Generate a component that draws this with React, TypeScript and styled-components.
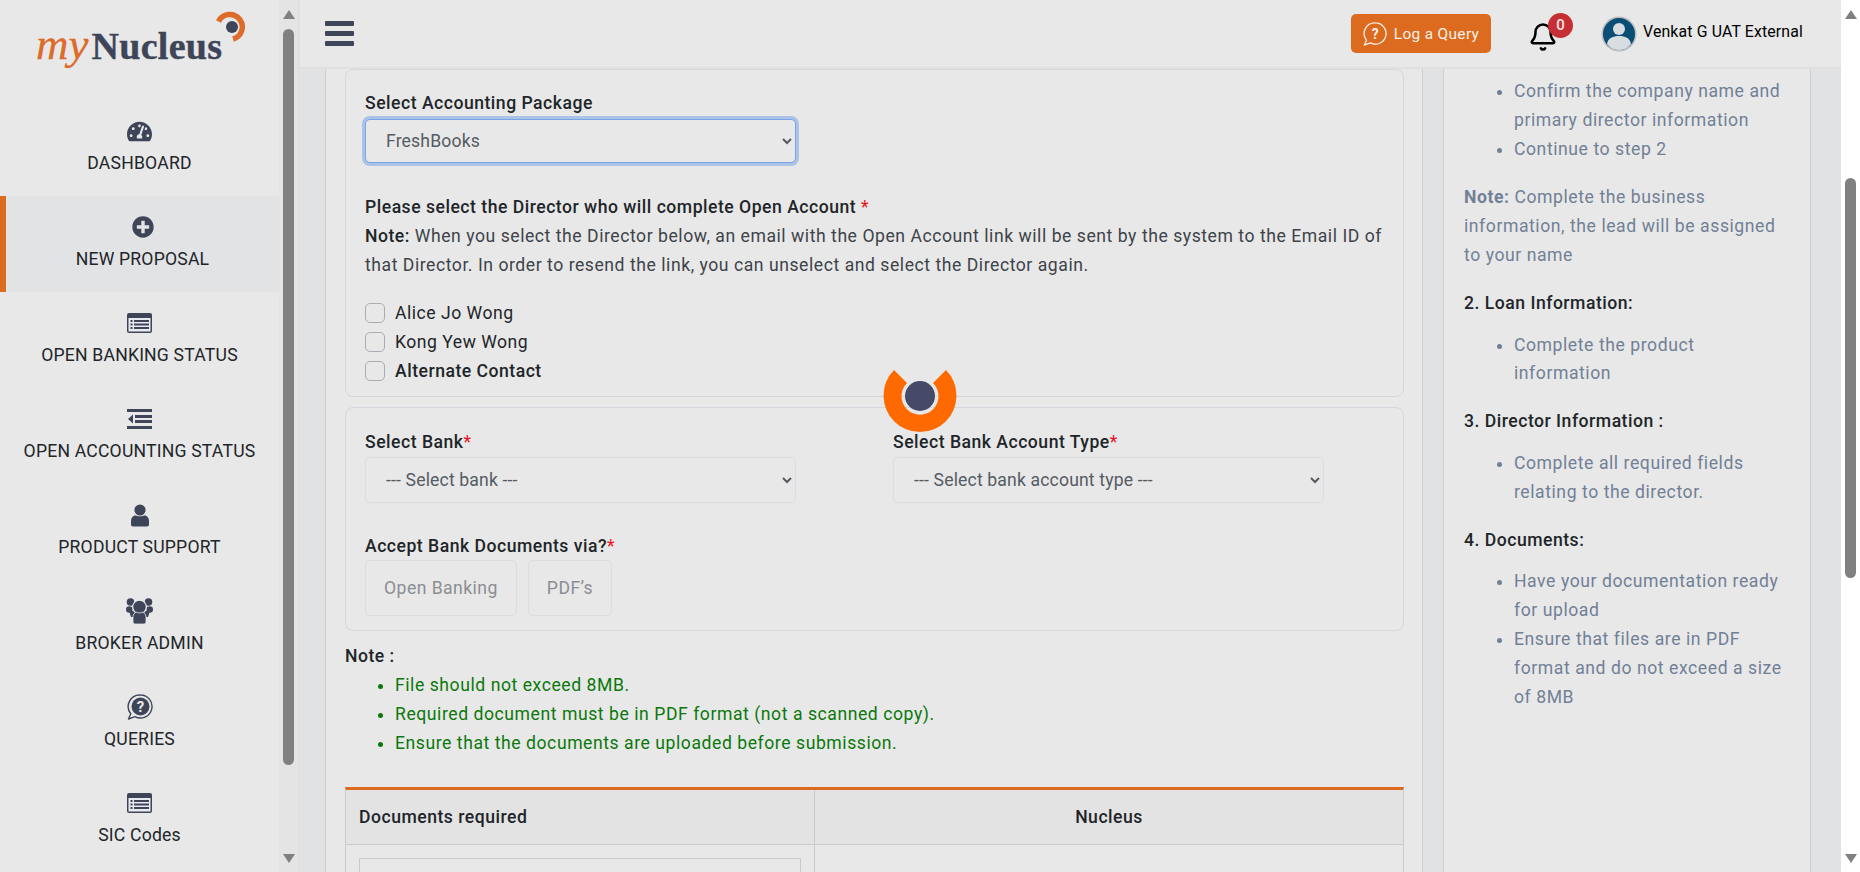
import React from "react";
import styled, { createGlobalStyle } from "styled-components";
import { FaTachometerAlt, FaPlusCircle } from "react-icons/fa";
import { Bell } from "lucide-react";

const Global = createGlobalStyle`
  html, body { margin: 0; padding: 0; height: 872px; overflow: hidden; background: #e8e8e8; }
  * { box-sizing: border-box; }
  body { font-family: Roboto, "Liberation Sans", sans-serif; font-size: 17.6px; color: #212529; }
`;

const Shell = styled.div`
  display: flex;
  width: 1860px;
  height: 872px;
  overflow: hidden;
  position: relative;
  background: #e8e8e8;
`;

const Sidebar = styled.aside`
  display: flex;
  width: 300px;
  height: 872px;
  flex: none;
  border-right: 2px solid #e0e0e0;
`;

const SideNav = styled.nav`
  width: 279px;
  flex: none;
  display: flex;
  flex-direction: column;
`;

const LogoBox = styled.div`
  height: 100px;
  padding: 12px 0 0 36px;
  position: relative;
`;

const LogoText = styled.div`
  display: flex;
  align-items: baseline;
  height: 56px;
  padding-top: 6px;
  white-space: nowrap;
`;

const LogoMy = styled.span`
  font-family: "Liberation Serif", serif;
  font-style: italic;
  font-size: 45px;
  line-height: 52px;
  color: #dd6b2a;
  -webkit-text-stroke: 0.3px #dd6b2a;
`;

const LogoName = styled.span`
  font-family: "Liberation Serif", serif;
  font-weight: 700;
  font-size: 38px;
  line-height: 52px;
  color: #3f4559;
  margin-left: 3px;
  letter-spacing: 0.3px;
  -webkit-text-stroke: 0.4px #3f4559;
`;

const LogoMark = styled.svg`
  position: absolute;
  left: 216px;
  top: 11px;
`;

const NavItem = styled.a<{ $active?: boolean }>`
  height: 96px;
  flex: none;
  display: flex;
  flex-direction: column;
  align-items: center;
  justify-content: flex-start;
  padding-top: 17px;
  background: ${(p) => (p.$active ? "#e2e3e5" : "transparent")};
  border-left: ${(p) => (p.$active ? "6px solid #dc6b20" : "0")};
  color: #212529;
  font-size: 17.6px;
  line-height: 24px;
  letter-spacing: 0.2px;
  white-space: nowrap;
`;

const NavIcon = styled.span`
  height: 28px;
  display: flex;
  align-items: center;
  justify-content: center;
  color: #3f4559;
  margin-bottom: 6px;
`;

const BarTrack = styled.div<{ $white?: boolean }>`
  width: 19px;
  flex: none;
  display: flex;
  flex-direction: column;
  align-items: center;
  background: ${(p) => (p.$white ? "#ffffff" : "#e4e4e4")};
  position: relative;
  height: 872px;
  padding-top: 10px;
`;

const ArrowUp = styled.div`
  width: 0;
  height: 0;
  border-left: 6px solid transparent;
  border-right: 6px solid transparent;
  border-bottom: 9px solid #808080;
`;

const ArrowDown = styled.div`
  width: 0;
  height: 0;
  border-left: 6px solid transparent;
  border-right: 6px solid transparent;
  border-top: 9px solid #808080;
  margin-top: auto;
  margin-bottom: 9px;
`;

const Thumb = styled.div<{ $top: number; $height: number }>`
  width: 11px;
  height: ${(p) => p.$height}px;
  margin-top: ${(p) => p.$top}px;
  background: #808080;
  border-radius: 6px;
`;

const Main = styled.div`
  width: 1541px;
  flex: none;
  display: flex;
  flex-direction: column;
  height: 872px;
`;

const Header = styled.header`
  height: 69px;
  flex: none;
  display: flex;
  align-items: center;
  padding: 0 0 0 25px;
  border-bottom: 2px solid #e0e0e0;
  background: #e8e8e8;
`;

const Burger = styled.div`
  width: 29px;
  display: flex;
  flex-direction: column;
  gap: 5px;
  margin-top: -1px;
  span {
    height: 5px;
    border-radius: 1px;
    background: #3f4559;
  }
`;

const QueryButton = styled.button`
  margin-left: 997px;
  width: 140px;
  height: 39px;
  margin-top: -1px;
  background: #dc6b20;
  color: #f6f0ea;
  border: 0;
  border-radius: 5px;
  display: flex;
  align-items: center;
  justify-content: center;
  gap: 7px;
  font-family: Roboto, sans-serif;
  font-size: 15.4px;
  letter-spacing: 0.35px;
  padding: 2px 0 0;
`;

const BellWrap = styled.div`
  position: relative;
  width: 30px;
  height: 30px;
  margin-left: 37px;
  margin-top: 7px;
  color: #000;
  svg { display: block; }
`;

const Badge = styled.span`
  position: absolute;
  left: 20px;
  top: -9px;
  width: 25px;
  height: 25px;
  border-radius: 50%;
  background: #c62f34;
  color: #f3e4e4;
  font-size: 15px;
  font-weight: 500;
  line-height: 25px;
  text-align: center;
`;

const Avatar = styled.svg`
  margin-left: 43px;
  flex: none;
`;

const UserName = styled.span`
  margin-left: 6px;
  margin-top: -4px;
  color: #000;
  font-size: 15.84px;
  letter-spacing: 0.15px;
  white-space: nowrap;
`;

const Body = styled.div`
  flex: 1;
  min-height: 0;
  display: flex;
  background: #e1e2e4;
  padding-left: 25px;
  gap: 20px;
  overflow: hidden;
`;

const LeftCard = styled.section`
  width: 1098px;
  flex: none;
  background: #e8e8e8;
  border-left: 1px solid #ccd0d5;
  border-right: 1px solid #ccd0d5;
  padding: 0 18px 0 19px;
  overflow: hidden;
`;

const RightCard = styled.section`
  width: 368px;
  flex: none;
  background: #e8e8e8;
  border-left: 1px solid #ccd0d5;
  border-right: 1px solid #ccd0d5;
  padding: 8px 20px 0 20px;
  font-size: 17.6px;
  line-height: 28.8px;
  letter-spacing: 0.56px;
  color: #718096;
`;

const Panel = styled.div<{ $pad: string; $mb?: number }>`
  border: 1px solid #d3d7de;
  border-radius: 8px;
  padding: ${(p) => p.$pad};
  margin-bottom: ${(p) => p.$mb ?? 0}px;
`;

const FieldLabel = styled.div`
  font-weight: 500;
  font-size: 17.6px;
  line-height: 29px;
  letter-spacing: 0.5px;
  color: #212529;
  em { color: #e8101c; font-style: normal; font-weight: 400; }
`;

const Select = styled.select<{ $focus?: boolean; $h: number }>`
  display: block;
  width: 431px;
  height: ${(p) => p.$h}px;
  padding: 0 0 0 16px;
  background: #e8e8e8;
  border: 1px solid ${(p) => (p.$focus ? "#7ba4e6" : "#dadde2")};
  border-radius: 5px;
  box-shadow: ${(p) => (p.$focus ? "0 0 0 3px #a9c2e8" : "none")};
  color: #555b63;
  font-family: Roboto, sans-serif;
  font-size: 17.6px;
  letter-spacing: 0.15px;
  outline: none;
`;

const Block = styled.div<{ $mt: number; $mb?: number }>`
  margin-top: ${(p) => p.$mt}px;
  margin-bottom: ${(p) => p.$mb ?? 0}px;
`;

const Para = styled.p`
  margin: 0;
  font-size: 17.6px;
  line-height: 29px;
  letter-spacing: 0.54px;
  color: #3d4349;
  strong { font-weight: 500; color: #212529; letter-spacing: 0.5px; }
  em { color: #e8101c; font-style: normal; }
`;

const CheckRow = styled.label<{ $bold?: boolean }>`
  display: flex;
  align-items: center;
  gap: 10px;
  height: 29px;
  font-size: 17.6px;
  letter-spacing: 0.5px;
  color: #212529;
  font-weight: ${(p) => (p.$bold ? 500 : 400)};
  input {
    appearance: none;
    width: 20px;
    height: 20px;
    margin: 0;
    border: 1px solid #a9adb3;
    border-radius: 5px;
    background: #e8e8e8;
  }
`;

const TwoCols = styled.div`
  display: flex;
  gap: 97px;
`;

const ToggleRow = styled.div`
  display: flex;
  gap: 11px;
  margin-top: -1px;
`;

const Toggle = styled.button`
  height: 56px;
  padding: 0 18px;
  background: transparent;
  border: 1px solid #dadde2;
  border-radius: 5px;
  color: #8b8e92;
  font-family: Roboto, sans-serif;
  font-size: 17.6px;
  letter-spacing: 0.45px;
`;

const NoteTitle = styled.div`
  font-weight: 500;
  line-height: 29px;
  letter-spacing: 0.5px;
  margin-top: 11px;
`;

const GreenList = styled.ul`
  margin: 0 0 29px 0;
  padding: 0 0 0 50px;
  line-height: 29px;
  letter-spacing: 0.55px;
  color: #0b780b;
`;

const DocTable = styled.div`
  border-top: 3px solid #dc6b20;
  border-left: 1px solid #cbcbcb;
  border-right: 1px solid #cbcbcb;
  display: grid;
  grid-template-columns: 468px 1fr;
`;

const HeadCell = styled.div<{ $center?: boolean; $left?: boolean }>`
  height: 55px;
  background: #e3e3e3;
  border-bottom: 1px solid #cbcbcb;
  border-left: ${(p) => (p.$left ? "1px solid #cbcbcb" : "0")};
  display: flex;
  align-items: center;
  justify-content: ${(p) => (p.$center ? "center" : "flex-start")};
  padding-left: ${(p) => (p.$center ? "0" : "13px")};
  font-weight: 500;
  letter-spacing: 0.5px;
`;

const BodyCell = styled.div<{ $left?: boolean }>`
  height: 60px;
  padding: 13px 13px 0;
  border-left: ${(p) => (p.$left ? "1px solid #cbcbcb" : "0")};
`;

const InnerBox = styled.div`
  height: 60px;
  border: 1px solid #cbcbcb;
`;

const GuideList = styled.ul`
  margin: 0;
  padding: 0 0 0 50px;
`;

const GuideNote = styled.p`
  margin: 20px 0 0;
  strong { font-weight: 700; color: #718096; }
`;

const GuideHead = styled.div`
  margin: 19px 0 13px;
  font-weight: 500;
  letter-spacing: 0.5px;
  color: #212529;
`;

const Spinner = styled.svg`
  position: absolute;
  left: 883px;
  top: 359px;
  z-index: 5;
`;

const ListIcon = () => (
  <svg width="25" height="20" viewBox="0 0 25 20">
    <rect width="25" height="20" rx="2" fill="#3f4559" />
    <rect x="1.5" y="5" width="22" height="13.5" fill="#e8eaf0" />
    <g fill="#3f4559">
      <rect x="3.5" y="7" width="2" height="2" />
      <rect x="3.5" y="10.5" width="2" height="2" />
      <rect x="3.5" y="14" width="2" height="2" />
      <rect x="7" y="7" width="15" height="2" />
      <rect x="7" y="10.5" width="15" height="2" />
      <rect x="7" y="14" width="15" height="2" />
    </g>
  </svg>
);

const OutdentIcon = () => (
  <svg width="25" height="20" viewBox="0 0 25 20" fill="#3f4559">
    <rect width="25" height="3" />
    <rect x="8" y="6" width="17" height="3" />
    <rect x="8" y="11" width="17" height="3" />
    <rect y="17" width="25" height="3" />
    <path d="M6 5.500v9L1 10z" />
  </svg>
);

const UserIcon = () => (
  <svg width="20" height="23" viewBox="0 0 20 23" fill="#3f4559">
    <circle cx="10" cy="6" r="5.600" />
    <path d="M5.500 11.200C7 12.600 13 12.600 14.500 11.200 17.500 11.600 19 14 19 17v3.500a2 2 0 0 1-2 2H3a2 2 0 0 1-2-2V17c0-3 1.500-5.400 4.500-5.800z" />
  </svg>
);

const UsersIcon = () => (
  <svg width="27" height="26" viewBox="0 0 27 26" fill="#3f4559">
    <circle cx="4.500" cy="4" r="3.800" />
    <circle cx="22.500" cy="4" r="3.800" />
    <circle cx="3.300" cy="11.500" r="3.300" />
    <circle cx="23.700" cy="11.500" r="3.300" />
    <path d="M3 13h21l-2 6H5z" />
    <circle cx="13.500" cy="9" r="6.800" stroke="#e8e8e8" strokeWidth="1.200" />
    <path d="M7 19c0-3 2-4.500 3.500-4.800 1.500 1 4.500 1 6 0C18 14.500 20 16 20 19v5a2 2 0 0 1-2 2H9a2 2 0 0 1-2-2z" stroke="#e8e8e8" strokeWidth="0.800" />
  </svg>
);

const BubbleIcon = ({ size, color, solid }: { size: number; color: string; solid?: boolean }) => (
  <svg width={size} height={size} viewBox="0 0 26 26">
    <path d="M13.500 1a11.500 11.500 0 1 1-5.500 21.600L1.500 25l2.300-5.300A11.500 11.500 0 0 1 13.500 1z" fill="none" stroke={color} strokeWidth="1.400" strokeLinejoin="round" />
    {solid && <circle cx="13.500" cy="12.500" r="9" fill={color} />}
    <text x="13.500" y="18" textAnchor="middle" fontFamily="Roboto, sans-serif" fontWeight="700" fontSize="15" fill={solid ? "#e8e8e8" : color}>?</text>
  </svg>
);

const items: { label: string; icon: React.ReactNode; active?: boolean }[] = [
  { label: "DASHBOARD", icon: <FaTachometerAlt size={25} /> },
  { label: "NEW PROPOSAL", icon: <FaPlusCircle size={22} />, active: true },
  { label: "OPEN BANKING STATUS", icon: <ListIcon /> },
  { label: "OPEN ACCOUNTING STATUS", icon: <OutdentIcon /> },
  { label: "PRODUCT SUPPORT", icon: <UserIcon /> },
  { label: "BROKER ADMIN", icon: <UsersIcon /> },
  { label: "QUERIES", icon: <BubbleIcon size={26} color="#3f4559" solid /> },
  { label: "SIC Codes", icon: <ListIcon /> },
];

export default function App() {
  return (
    <Shell>
      <Global />
      <Sidebar>
        <SideNav>
          <LogoBox>
            <LogoText>
              <LogoMy>my</LogoMy>
              <LogoName>Nucleus</LogoName>
            </LogoText>
            <LogoMark width="32" height="32" viewBox="0 0 32 32">
              <path d="M2.500 10.500A12.500 12.500 0 1 1 17 28" fill="none" stroke="#dd6b2a" strokeWidth="5.500" />
              <circle cx="16" cy="16" r="6" fill="#3f4559" />
            </LogoMark>
          </LogoBox>
          {items.map((it) => (
            <NavItem key={it.label} $active={it.active}>
              <NavIcon>{it.icon}</NavIcon>
              {it.label}
            </NavItem>
          ))}
        </SideNav>
        <BarTrack>
          <ArrowUp />
          <Thumb $top={10} $height={736} />
          <ArrowDown />
        </BarTrack>
      </Sidebar>

      <Main>
        <Header>
          <Burger>
            <span />
            <span />
            <span />
          </Burger>
          <QueryButton>
            <BubbleIcon size={24} color="#f6f0ea" />
            Log a Query
          </QueryButton>
          <BellWrap>
            <Bell size={30} strokeWidth={2} />
            <Badge>0</Badge>
          </BellWrap>
          <Avatar width="36" height="36" viewBox="0 0 36 36">
            <circle cx="18" cy="18" r="17.500" fill="#bdbdbd" />
            <circle cx="18" cy="18" r="16" fill="#0a4e75" />
            <circle cx="18" cy="13" r="6" fill="#d8dde1" />
            <path d="M6 28c1-6 6-8 12-8s11 2 12 8a15 15 0 0 1-24 0z" fill="#d8dde1" />
          </Avatar>
          <UserName>Venkat G UAT External</UserName>
        </Header>

        <Body>
          <LeftCard>
            <Panel $pad="19px 15px 11px 19px" $mb={10}>
              <FieldLabel>Select Accounting Package</FieldLabel>
              <Block $mt={1}>
                <Select $focus $h={44}>
                  <option>FreshBooks</option>
                </Select>
              </Block>
              <Block $mt={30} $mb={18}>
                <Para>
                  <strong>Please select the Director who will complete Open Account</strong> <em>*</em>
                  <br />
                  <strong>Note:</strong> When you select the Director below, an email with the Open Account link will be sent by the system to the Email ID of that Director. In order to resend the link, you can unselect and select the Director again.
                </Para>
              </Block>
              <CheckRow>
                <input type="checkbox" />
                Alice Jo Wong
              </CheckRow>
              <CheckRow>
                <input type="checkbox" />
                Kong Yew Wong
              </CheckRow>
              <CheckRow $bold>
                <input type="checkbox" />
                Alternate Contact
              </CheckRow>
            </Panel>

            <Panel $pad="20px 19px 14px 19px">
              <TwoCols>
                <div>
                  <FieldLabel>
                    Select Bank<em>*</em>
                  </FieldLabel>
                  <Block $mt={0}>
                    <Select $h={46}>
                      <option>--- Select bank ---</option>
                    </Select>
                  </Block>
                </div>
                <div>
                  <FieldLabel>
                    Select Bank Account Type<em>*</em>
                  </FieldLabel>
                  <Block $mt={0}>
                    <Select $h={46}>
                      <option>--- Select bank account type ---</option>
                    </Select>
                  </Block>
                </div>
              </TwoCols>
              <Block $mt={29}>
                <FieldLabel>
                  Accept Bank Documents via?<em>*</em>
                </FieldLabel>
                <ToggleRow>
                  <Toggle>Open Banking</Toggle>
                  <Toggle>PDF’s</Toggle>
                </ToggleRow>
              </Block>
            </Panel>

            <NoteTitle>Note :</NoteTitle>
            <GreenList>
              <li>File should not exceed 8MB.</li>
              <li>Required document must be in PDF format (not a scanned copy).</li>
              <li>Ensure that the documents are uploaded before submission.</li>
            </GreenList>

            <DocTable>
              <HeadCell>Documents required</HeadCell>
              <HeadCell $center $left>Nucleus</HeadCell>
              <BodyCell>
                <InnerBox />
              </BodyCell>
              <BodyCell $left />
            </DocTable>
          </LeftCard>

          <RightCard>
            <GuideList>
              <li>Confirm the company name and primary director information</li>
              <li>Continue to step 2</li>
            </GuideList>
            <GuideNote>
              <strong>Note:</strong> Complete the business information, the lead will be assigned to your name
            </GuideNote>
            <GuideHead>2. Loan Information:</GuideHead>
            <GuideList>
              <li>Complete the product information</li>
            </GuideList>
            <GuideHead>3. Director Information :</GuideHead>
            <GuideList>
              <li>Complete all required fields relating to the director.</li>
            </GuideList>
            <GuideHead>4. Documents:</GuideHead>
            <GuideList>
              <li>Have your documentation ready for upload</li>
              <li>Ensure that files are in PDF format and do not exceed a size of 8MB</li>
            </GuideList>
          </RightCard>
        </Body>
      </Main>

      <BarTrack $white>
        <ArrowUp />
        <Thumb $top={159} $height={400} />
        <ArrowDown />
      </BarTrack>

      <Spinner width="74" height="74" viewBox="0 0 74 74">
        <path d="M11 11A36.500 36.500 0 1 0 63 11L50 24A18.500 18.500 0 1 1 24 24z" fill="#ff6a00" />
        <circle cx="37" cy="37" r="15" fill="#454a68" />
      </Spinner>
    </Shell>
  );
}
